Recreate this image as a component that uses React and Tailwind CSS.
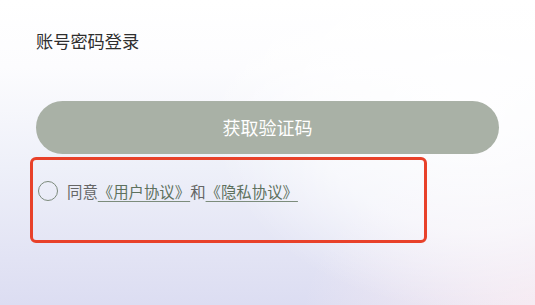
import React from 'react';

function App() {
  return (
    <div
      className="relative w-[535px] h-[305px] overflow-hidden bg-[radial-gradient(ellipse_260px_200px_at_470px_110px,rgba(255,255,255,0.9)_0%,rgba(255,255,255,0.6)_60%,transparent_100%),radial-gradient(ellipse_260px_200px_at_560px_330px,#fbeef3_0%,transparent_100%),linear-gradient(180deg,#ffffff_0%,#fcfcfe_22%,#eef0f9_55%,#e2e3f4_85%,#dcddf2_100%)]"
      style={{ fontFamily: '"Noto Sans CJK SC", "Noto Sans", sans-serif' }}
    >
      <div className="pt-[28px] pl-[36px] pr-[36px]">
        <h1 className="text-[17.2px] leading-[26px] text-[#2e2e2e] font-normal">账号密码登录</h1>

        <button className="mt-[47px] w-[463px] h-[53px] rounded-full bg-[#a9b1a6] text-white text-[18px] flex items-center justify-center">
          获取验证码
        </button>
      </div>

      {/* agreement */}
      <div className="ml-[30px] mt-[3px] w-[397px] h-[86px] border-[3px] border-[#e8412a] rounded-[6px] pt-[20px] pl-[5px]">
        <div className="flex items-center h-[22px] text-[15.4px] leading-[22px]">
          <span className="w-[20px] h-[20px] rounded-full border-[1.6px] border-[#7c8a7c] mr-[9px] shrink-0" />
          <span className="text-[#666666]">同意</span>
          <span className="text-[#5e715e] underline underline-offset-[3px] decoration-[#7c8c7c]">《用户协议》</span>
          <span className="text-[#666666]">和</span>
          <span className="text-[#5e715e] underline underline-offset-[3px] decoration-[#7c8c7c]">《隐私协议》</span>
        </div>
      </div>
    </div>
  );
}

export default App;
